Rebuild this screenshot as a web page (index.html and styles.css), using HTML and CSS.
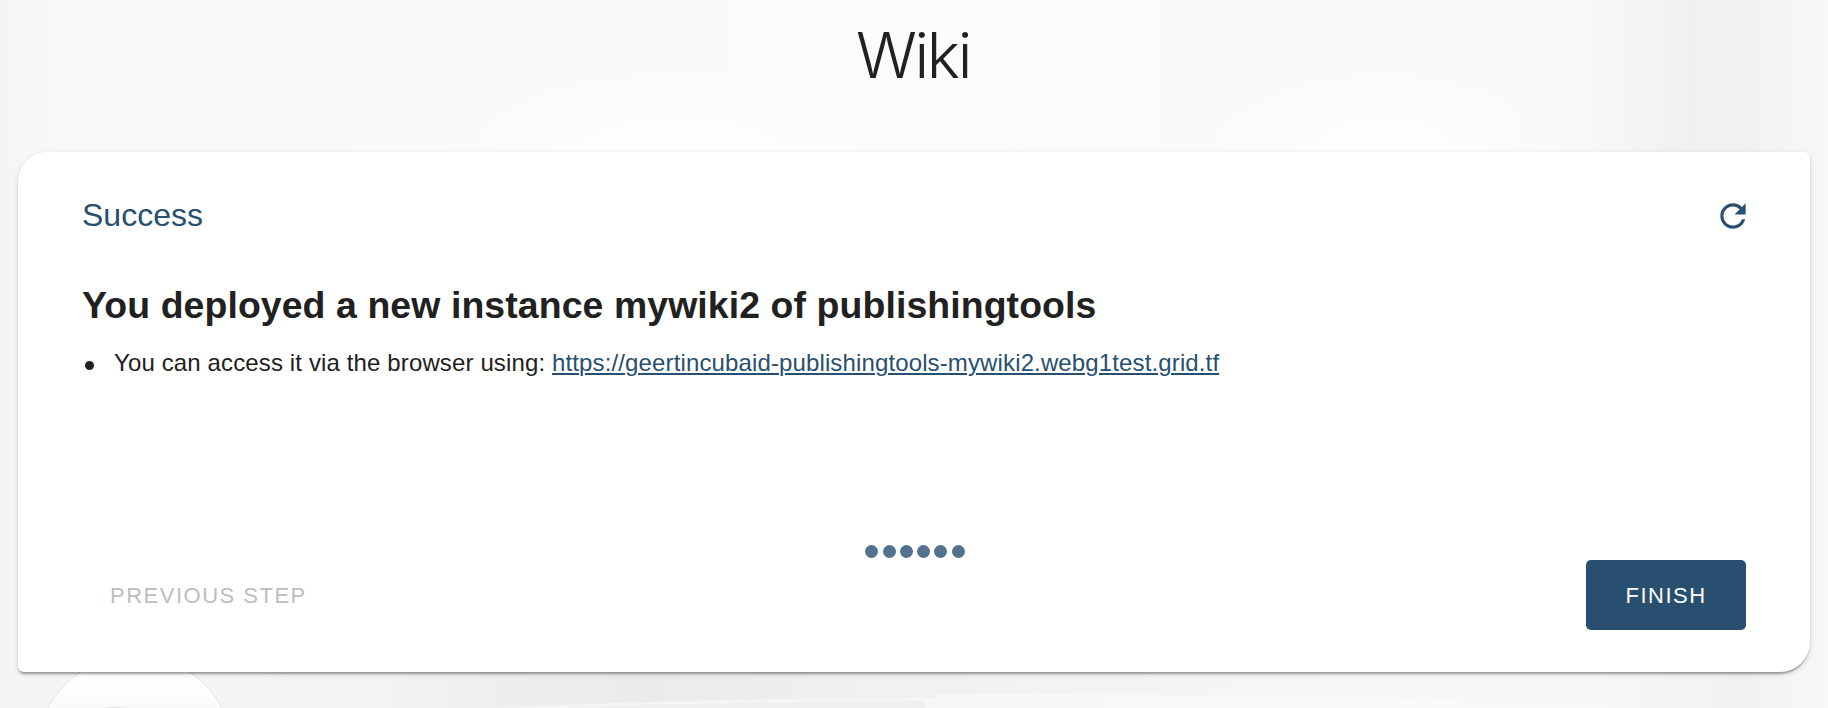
FILE: index.html
```html
<!DOCTYPE html>
<html lang="en">
<head>
<meta charset="utf-8">
<title>Wiki</title>
<link rel="stylesheet" href="styles.css">
</head>
<body>
<div class="page">
  <div class="floor"></div>
  <svg class="swoosh" viewBox="0 0 1828 36"><path d="M490 36Q700 26 935 26V22Q1250 20 1640 36Z" fill="#fafaf9" opacity=".6"/><path d="M560 36Q750 29 925 29V36Z" fill="#efefee"/></svg>
  <div class="bubble"></div>
  <h1 class="title">Wiki</h1>
  <main class="card">
    <header class="card-head">
      <h2 class="status">Success</h2>
      <svg class="refresh" viewBox="0 0 24 24"><path d="M17.65 6.35C16.2 4.9 14.21 4 12 4c-4.42 0-7.99 3.58-7.99 8s3.57 8 7.99 8c3.73 0 6.84-2.55 7.73-6h-2.08c-.82 2.33-3.04 4-5.65 4-3.31 0-6-2.69-6-6s2.69-6 6-6c1.66 0 3.14.69 4.22 1.78L13 11h7V4l-2.35 2.35z"/></svg>
    </header>
    <section class="message">
      <h3 class="headline">You deployed a new instance mywiki2 of publishingtools</h3>
      <ul class="list"><li class="item"><span>You can access it via the browser using: </span><a class="link" href="#">https://geertincubaid-publishingtools-mywiki2.webg1test.grid.tf</a></li></ul>
    </section>
    <div class="steps"><i class="dot"></i><i class="dot"></i><i class="dot"></i><i class="dot"></i><i class="dot"></i><i class="dot"></i></div>
    <footer class="actions">
      <button class="btn previous" disabled>PREVIOUS STEP</button>
      <button class="btn finish">FINISH</button>
    </footer>
  </main>
</div>
</body>
</html>
```
FILE: styles.css
```css
* { box-sizing: border-box; }
body { margin: 0; font-family: "Liberation Sans", Arial, sans-serif; color: #212121; }
.page {
  position: relative;
  height: 708px;
  padding: 0 18px;
  overflow: hidden;
  background:
    radial-gradient(ellipse 260px 90px at 680px 152px, #fdfdfd, rgba(253,253,253,0)),
    radial-gradient(ellipse 200px 90px at 1390px 152px, #fdfdfd, rgba(253,253,253,0)),
    linear-gradient(90deg, #f5f5f4 0, #f8f8f7 60px, #fafaf9 500px, #fbfbfb 900px, #fafafa 1500px, #f8f8f7 1590px, #f0f0ee 1690px, #f1f1f0 1740px, #f8f8f8 1828px);
}
/* Shaded strip of the backdrop below the card */
.floor {
  position: absolute;
  left: 0;
  right: 0;
  bottom: 0;
  height: 46px;
  background: linear-gradient(90deg, #f5f5f4 0, #f4f4f3 350px, #efefed 480px, #ebebea 640px, #f0f0ef 850px, #f3f3f2 1060px, #f7f7f6 1350px, #f7f7f6 1600px, #f1f1ef 1740px, #f8f8f8 1828px);
}
.swoosh { position: absolute; left: 0; bottom: 0; width: 1828px; height: 36px; }
.bubble {
  position: absolute;
  left: 36px;
  top: 655px;
  width: 198px;
  height: 198px;
  border: 1px solid #e2e2e2;
  border-radius: 50%;
  background:
    radial-gradient(ellipse 15px 3px at 78px 53px, #cfd1d1, rgba(207,209,209,0)),
    linear-gradient(#fff 0, #fefefe 35px, #f8f9f9 55px);
}
.title {
  margin: 0;
  height: 152px;
  padding: 16px 2px 0 0;
  font: 300 63px/78px Inter, sans-serif;
  letter-spacing: -2.4px;
  text-align: center;
}
.card {
  position: relative;
  height: 520px;
  padding: 40px 64px 42px 64px;
  display: flex;
  flex-direction: column;
  background: #fff;
  border-radius: 30px 6px 30px 6px;
  box-shadow: 0 4px 2px -2px rgba(0,0,0,.2), 0 2px 2px rgba(0,0,0,.14), 0 2px 6px rgba(0,0,0,.12);
}
.card-head { display: flex; justify-content: space-between; height: 48px; }
.status { margin: 0; font-size: 32px; font-weight: 400; line-height: 46px; color: #284f70; }
.refresh { width: 38px; height: 38px; margin: 4.5px -6px 0 0; fill: #284f70; }
.message { height: 265px; padding-top: 41px; }
.headline { margin: 0; font-size: 37.4px; font-weight: 700; line-height: 48px; letter-spacing: .1px; }
.list { margin: 0; padding: 20px 0 0; font-size: 24px; line-height: 28px; letter-spacing: .13px; list-style: none; }
.item { display: flex; align-items: center; white-space: pre; }
.item::before { content: ""; width: 9px; height: 9px; margin: 5px 20px 0 3px; border-radius: 50%; background: #212121; }
.link { color: #284f70; text-underline-offset: 2px; text-decoration-thickness: 2px; }
.steps { display: flex; justify-content: center; gap: 4.3px; height: 55px; padding-left: 2px; align-items: flex-start; }
.dot { width: 13px; height: 13px; margin-top: 39.5px; border-radius: 50%; background: #53728d; }
.actions { display: flex; justify-content: space-between; }
.btn { height: 70px; padding: 2px 0 0; border: 0; border-radius: 5px; font: 22px/68px "Liberation Sans", Arial, sans-serif; letter-spacing: 1.5px; }
.previous { padding-left: 28px; background: none; color: #bdbdbd; }
.finish { width: 160px; background: #284f70; color: #fff; }
```
